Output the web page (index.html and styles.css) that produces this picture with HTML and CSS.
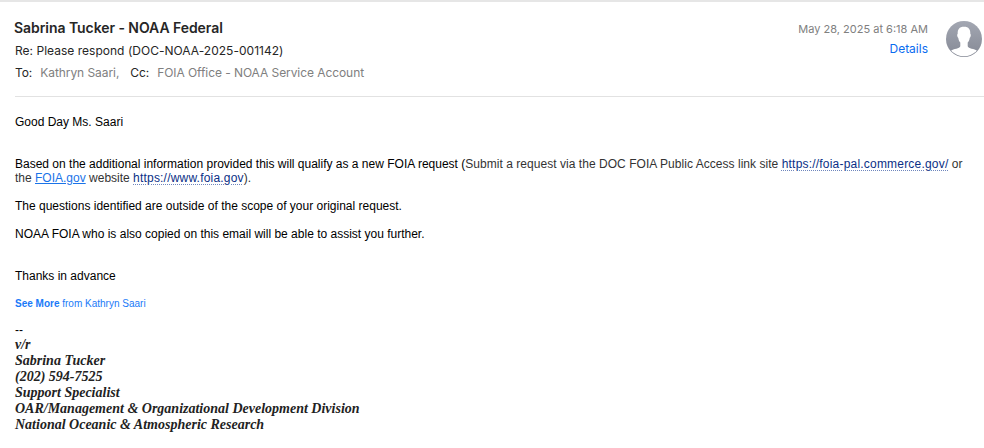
FILE: index.html
```html
<!doctype html>
<html lang="en">
    <head>
        <meta charset="utf-8" />
        <title>Re: Please respond (DOC-NOAA-2025-001142)</title>
        <link rel="stylesheet" href="styles.css">
    </head>
    <body>
        <div class="message">
            <header class="header">
                <div class="info">
                    <div class="sender">Sabrina Tucker - NOAA Federal</div>
                    <div class="subject">Re: Please respond (DOC-NOAA-2025-001142)</div>
                    <div class="recipients">
                        <span class="label">To:</span>
                        <span class="to">Kathryn Saari,</span>
                        <span class="label">Cc:</span>
                        <span class="cc">FOIA Office - NOAA Service Account</span>
                    </div>
                </div>
                <div class="meta">
                    <span class="date">May 28, 2025 at 6:18 AM</span>
                    <a class="details">Details</a>
                </div>
                <svg class="avatar" width="36" height="36" viewBox="0 0 36 36">
                    <defs>
                        <linearGradient id="avatar-bg" x1="0" y1="0" x2="0" y2="1">
                            <stop offset="0" stop-color="#a3a7b2" />
                            <stop offset="1" stop-color="#858995" />
                        </linearGradient>
                        <clipPath id="avatar-clip"><circle cx="18" cy="18" r="17.2" /></clipPath>
                    </defs>
                    <circle cx="18" cy="18" r="18" fill="url(#avatar-bg)" />
                    <path clip-path="url(#avatar-clip)" fill="#fff" d="M18 5.800c-4.800 0-6.500 2.700-6.300 7-.9.400-.6 3.200.6 4.100.3 2.200 1 3.600 2 4.700v3.600c-.6 2.300-6.500 2.500-9.800 4.600V36h27v-6.200c-3.300-2.100-9.200-2.300-9.800-4.600v-3.600c1-1.100 1.700-2.500 2-4.700 1.200-.9 1.500-3.700.6-4.100.2-4.300-1.500-7-6.300-7z" />
                </svg>
            </header>

            <div class="content">
                <p>Good Day Ms. Saari</p>
                <p class="spaced">
                    Based on the additional information provided this will qualify as a new FOIA request (<span class="quote">Submit a request via the DOC FOIA Public Access link site <a class="data-link">https://foia-pal.commerce.gov/</a> or</span><br>
                    <span class="reply">the <a class="link">FOIA.gov</a> website <a class="data-link">https://www.foia.gov</a>).</span>
                </p>
                <p>The questions identified are outside of the scope of your original request.</p>
                <p>NOAA FOIA who is also copied on this email will be able to assist you further.</p>
                <p class="spaced">Thanks in advance</p>
                <p class="see-more"><b>See More</b> from Kathryn Saari</p>
                <div class="dashes">--</div>
                <div class="signature">
                    <div>v/r</div>
                    <div>Sabrina Tucker</div>
                    <div>(202) 594-7525</div>
                    <div>Support Specialist</div>
                    <div>OAR/Management &amp; Organizational Development Division</div>
                    <div>National Oceanic &amp; Atmospheric Research</div>
                </div>
            </div>
        </div>
    </body>
</html>
```
FILE: styles.css
```css
body {
    margin: 0;
    background: #fff;
}
.message {
    box-sizing: border-box;
    height: 448px;
    border-top: 2px solid #e6e6e6;
    padding-left: 15px;
    overflow: hidden;
}
.header {
    display: flex;
    box-sizing: border-box;
    height: 95px;
    padding: 16px 2px 0 0;
    border-bottom: 1px solid #e2e2e2;
    font-family: Inter, sans-serif;
    font-size: 12px;
    color: #262626;
}
.info {
    flex: 1;
    white-space: nowrap;
}
.sender {
    margin-left: -1px;
    font-size: 14px;
    font-weight: 600;
    line-height: 20px;
    letter-spacing: -0.06px;
}
.subject {
    padding-top: 1px;
    line-height: 23px;
    letter-spacing: 0.02px;
}
.recipients {
    display: flex;
    line-height: 22px;
    letter-spacing: -0.07px;
}
.label {
    margin-right: 8px;
}
.to,
.cc,
.date {
    color: #808080;
}
.to {
    margin-right: 11px;
}
.meta {
    display: flex;
    flex-direction: column;
    align-items: flex-end;
    margin-right: 18px;
}
.date {
    font-size: 11px;
    line-height: 22px;
}
.details {
    line-height: 18px;
    color: #0a6cf0;
}
.avatar {
    margin-top: 3px;
}
.content {
    padding-top: 18px;
    font-family: "Liberation Sans", Arial, sans-serif;
    font-size: 12px;
    line-height: 14px;
    color: #000;
}
.content p {
    margin: 0 0 14px;
    white-space: nowrap;
}
.content .spaced {
    margin-top: 28px;
}
.quote {
    color: #333;
    letter-spacing: 0.04px;
}
.reply {
    color: #333;
}
.link {
    color: #1a73e8;
    text-decoration: underline;
}
.data-link {
    color: #0b2f86;
    letter-spacing: 0.2px;
    text-decoration: underline dotted #6f86bd 1px;
    text-underline-offset: 2px;
}
.content .see-more {
    margin-bottom: 12px;
    font-size: 10px;
    color: #1a7af8;
}
.signature {
    font-family: "Liberation Serif", "Times New Roman", serif;
    font-size: 14px;
    font-weight: bold;
    font-style: italic;
    line-height: 16px;
    color: #222;
}
```
